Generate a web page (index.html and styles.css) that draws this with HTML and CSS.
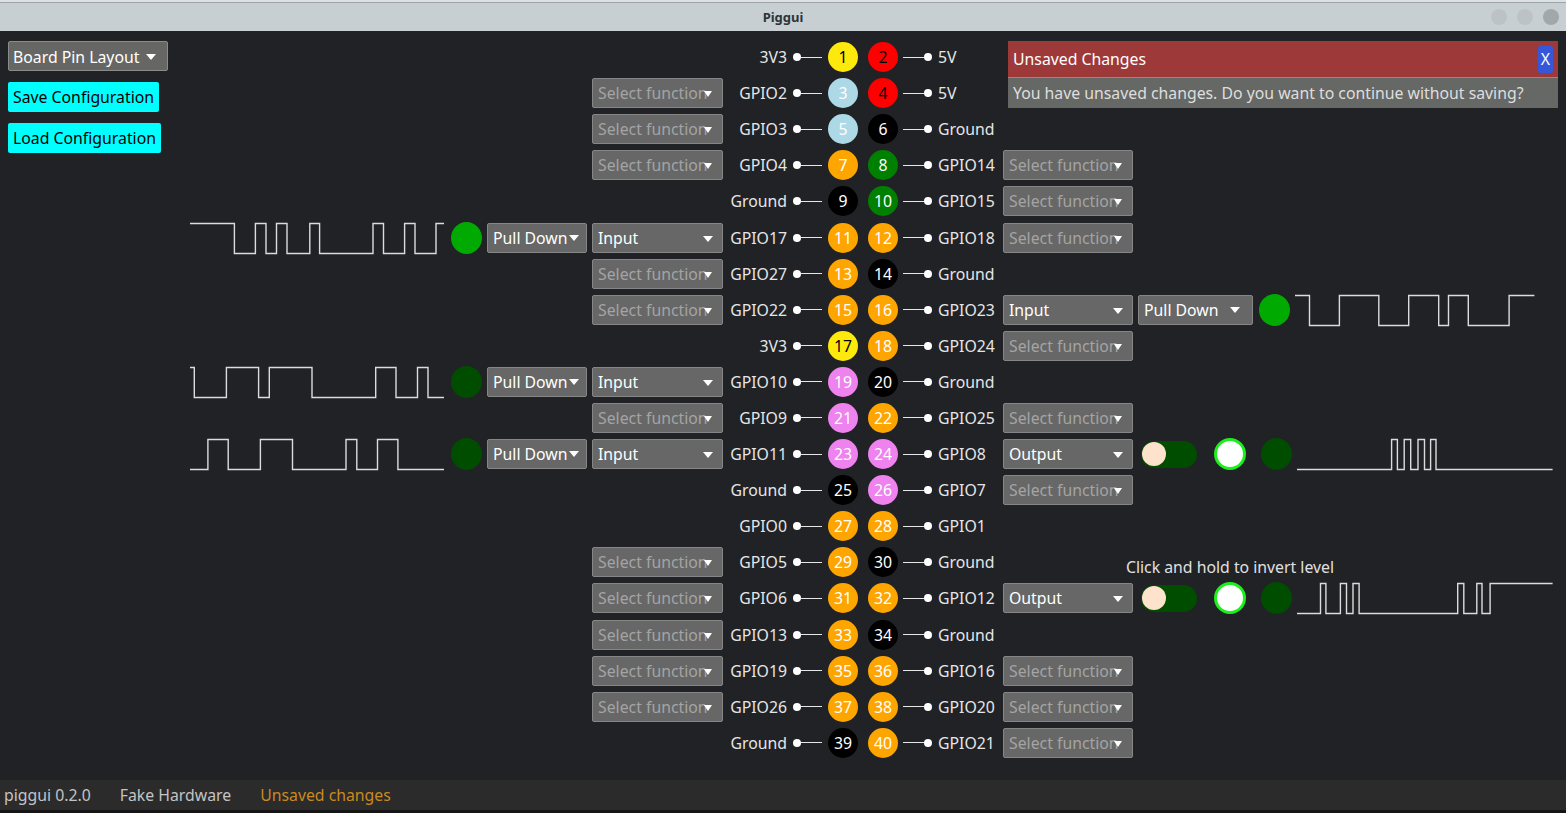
FILE: index.html
```html
<!DOCTYPE html>
<html>
<head>
<meta charset="utf-8">
<title>Piggui</title>
<link rel="stylesheet" href="styles.css">
</head>
<body>
<div class="titlebar">
  <span class="title">Piggui</span>
  <div class="wbtns"><i class="wb"></i><i class="wb"></i><i class="wb dark"></i></div>
</div>
<div class="main">
  <div class="sidebar">
    <div class="btn-dd">Board Pin Layout <i class="arr"></i></div>
    <div class="btn-cyan">Save Configuration</div>
    <div class="btn-cyan">Load Configuration</div>
  </div>
  <div class="board">
    <!-- 1 -->
    <div class="row">
      <div class="lside"><span class="lbl">3V3</span></div>
      <span class="dot"></span><span class="wire"></span>
      <span class="pin yel">1</span><span class="pin red">2</span>
      <span class="wire r"></span><span class="dot"></span>
      <div class="rside"><span class="lbl">5V</span></div>
    </div>
    <!-- 2 -->
    <div class="row">
      <div class="lside"><div class="sel fn"><span class="txt">Select function</span><i class="arr sm"></i></div><span class="lbl">GPIO2</span></div>
      <span class="dot"></span><span class="wire"></span>
      <span class="pin lb">3</span><span class="pin red">4</span>
      <span class="wire r"></span><span class="dot"></span>
      <div class="rside"><span class="lbl">5V</span></div>
    </div>
    <!-- 3 -->
    <div class="row">
      <div class="lside"><div class="sel fn"><span class="txt">Select function</span><i class="arr sm"></i></div><span class="lbl">GPIO3</span></div>
      <span class="dot"></span><span class="wire"></span>
      <span class="pin lb">5</span><span class="pin blk">6</span>
      <span class="wire r"></span><span class="dot"></span>
      <div class="rside"><span class="lbl">Ground</span></div>
    </div>
    <!-- 4 -->
    <div class="row">
      <div class="lside"><div class="sel fn"><span class="txt">Select function</span><i class="arr sm"></i></div><span class="lbl">GPIO4</span></div>
      <span class="dot"></span><span class="wire"></span>
      <span class="pin org">7</span><span class="pin grn">8</span>
      <span class="wire r"></span><span class="dot"></span>
      <div class="rside"><span class="lbl">GPIO14</span><div class="sel fn"><span class="txt">Select function</span><i class="arr sm"></i></div></div>
    </div>
    <!-- 5 -->
    <div class="row">
      <div class="lside"><span class="lbl">Ground</span></div>
      <span class="dot"></span><span class="wire"></span>
      <span class="pin blk">9</span><span class="pin grn">10</span>
      <span class="wire r"></span><span class="dot"></span>
      <div class="rside"><span class="lbl">GPIO15</span><div class="sel fn"><span class="txt">Select function</span><i class="arr sm"></i></div></div>
    </div>
    <!-- 6 -->
    <div class="row">
      <div class="lside">
        <svg class="wave" viewBox="0 0 256 36"><path d="M0 3.5H44.4V33.5H65.4V3.5H76V33.5H86.5V3.5H97V33.5H119.8V3.5H129.6V33.5H183V3.5H193.5V33.5H214.6V3.5H225V33.5H246V3.5H254"/></svg>
        <span class="led on"></span>
        <div class="pd">Pull Down<i class="arr"></i></div>
        <div class="sel"><span class="txt">Input</span><i class="arr"></i></div>
        <span class="lbl">GPIO17</span>
      </div>
      <span class="dot"></span><span class="wire"></span>
      <span class="pin org">11</span><span class="pin org">12</span>
      <span class="wire r"></span><span class="dot"></span>
      <div class="rside"><span class="lbl">GPIO18</span><div class="sel fn"><span class="txt">Select function</span><i class="arr sm"></i></div></div>
    </div>
    <!-- 7 -->
    <div class="row">
      <div class="lside"><div class="sel fn"><span class="txt">Select function</span><i class="arr sm"></i></div><span class="lbl">GPIO27</span></div>
      <span class="dot"></span><span class="wire"></span>
      <span class="pin org">13</span><span class="pin blk">14</span>
      <span class="wire r"></span><span class="dot"></span>
      <div class="rside"><span class="lbl">Ground</span></div>
    </div>
    <!-- 8 -->
    <div class="row">
      <div class="lside"><div class="sel fn"><span class="txt">Select function</span><i class="arr sm"></i></div><span class="lbl">GPIO22</span></div>
      <span class="dot"></span><span class="wire"></span>
      <span class="pin org">15</span><span class="pin org">16</span>
      <span class="wire r"></span><span class="dot"></span>
      <div class="rside">
        <span class="lbl">GPIO23</span>
        <div class="sel"><span class="txt">Input</span><i class="arr"></i></div>
        <div class="pd wide"><span class="txt">Pull Down</span><i class="arr"></i></div>
        <span class="led on"></span>
        <svg class="wave" viewBox="0 0 256 36"><path d="M0 3.5H14.5V33.5H44.4V3.5H83.8V33.5H113.7V3.5H143.7V33.5H153.5V3.5H173.3V33.5H214.1V3.5H239.4"/></svg>
      </div>
    </div>
    <!-- 9 -->
    <div class="row">
      <div class="lside"><span class="lbl">3V3</span></div>
      <span class="dot"></span><span class="wire"></span>
      <span class="pin yel">17</span><span class="pin org">18</span>
      <span class="wire r"></span><span class="dot"></span>
      <div class="rside"><span class="lbl">GPIO24</span><div class="sel fn"><span class="txt">Select function</span><i class="arr sm"></i></div></div>
    </div>
    <!-- 10 -->
    <div class="row">
      <div class="lside">
        <svg class="wave" viewBox="0 0 256 36"><path d="M0 3.5H4.3V33.5H36.4V3.5H68.6V33.5H79.3V3.5H122V33.5H185.7V3.5H206V33.5H227.5V3.5H238V33.5H254"/></svg>
        <span class="led"></span>
        <div class="pd">Pull Down<i class="arr"></i></div>
        <div class="sel"><span class="txt">Input</span><i class="arr"></i></div>
        <span class="lbl">GPIO10</span>
      </div>
      <span class="dot"></span><span class="wire"></span>
      <span class="pin vio">19</span><span class="pin blk">20</span>
      <span class="wire r"></span><span class="dot"></span>
      <div class="rside"><span class="lbl">Ground</span></div>
    </div>
    <!-- 11 -->
    <div class="row">
      <div class="lside"><div class="sel fn"><span class="txt">Select function</span><i class="arr sm"></i></div><span class="lbl">GPIO9</span></div>
      <span class="dot"></span><span class="wire"></span>
      <span class="pin vio">21</span><span class="pin org">22</span>
      <span class="wire r"></span><span class="dot"></span>
      <div class="rside"><span class="lbl">GPIO25</span><div class="sel fn"><span class="txt">Select function</span><i class="arr sm"></i></div></div>
    </div>
    <!-- 12 -->
    <div class="row">
      <div class="lside">
        <svg class="wave" viewBox="0 0 256 36"><path d="M0 33.5H17.9V3.5H38.2V33.5H70.4V3.5H102.5V33.5H156V3.5H166.8V33.5H187.5V3.5H207.9V33.5H254"/></svg>
        <span class="led"></span>
        <div class="pd">Pull Down<i class="arr"></i></div>
        <div class="sel"><span class="txt">Input</span><i class="arr"></i></div>
        <span class="lbl">GPIO11</span>
      </div>
      <span class="dot"></span><span class="wire"></span>
      <span class="pin vio">23</span><span class="pin vio">24</span>
      <span class="wire r"></span><span class="dot"></span>
      <div class="rside">
        <span class="lbl">GPIO8</span>
        <div class="sel"><span class="txt">Output</span><i class="arr"></i></div>
        <span class="toggle"><i class="knob"></i></span>
        <span class="push"></span>
        <span class="led"></span>
        <svg class="wave" viewBox="0 0 256 36"><path d="M0 33.5H94.6V3.5H100.4V33.5H107.2V3.5H113.7V33.5H121V3.5H127.5V33.5H133.6V3.5H139V33.5H255.6"/></svg>
      </div>
    </div>
    <!-- 13 -->
    <div class="row">
      <div class="lside"><span class="lbl">Ground</span></div>
      <span class="dot"></span><span class="wire"></span>
      <span class="pin blk">25</span><span class="pin vio">26</span>
      <span class="wire r"></span><span class="dot"></span>
      <div class="rside"><span class="lbl">GPIO7</span><div class="sel fn"><span class="txt">Select function</span><i class="arr sm"></i></div></div>
    </div>
    <!-- 14 -->
    <div class="row">
      <div class="lside"><span class="lbl">GPIO0</span></div>
      <span class="dot"></span><span class="wire"></span>
      <span class="pin org">27</span><span class="pin org">28</span>
      <span class="wire r"></span><span class="dot"></span>
      <div class="rside"><span class="lbl">GPIO1</span></div>
    </div>
    <!-- 15 -->
    <div class="row">
      <div class="lside"><div class="sel fn"><span class="txt">Select function</span><i class="arr sm"></i></div><span class="lbl">GPIO5</span></div>
      <span class="dot"></span><span class="wire"></span>
      <span class="pin org">29</span><span class="pin blk">30</span>
      <span class="wire r"></span><span class="dot"></span>
      <div class="rside"><span class="lbl">Ground</span></div>
    </div>
    <!-- 16 -->
    <div class="row">
      <div class="lside"><div class="sel fn"><span class="txt">Select function</span><i class="arr sm"></i></div><span class="lbl">GPIO6</span></div>
      <span class="dot"></span><span class="wire"></span>
      <span class="pin org">31</span><span class="pin org">32</span>
      <span class="wire r"></span><span class="dot"></span>
      <div class="rside">
        <span class="lbl">GPIO12</span>
        <div class="sel"><span class="txt">Output</span><i class="arr"></i></div>
        <span class="toggle"><i class="knob"></i></span>
        <span class="push"><span class="tip">Click and hold to invert level</span></span>
        <span class="led"></span>
        <svg class="wave" viewBox="0 0 256 36"><path d="M0 33.5H23.5V3.5H28.9V33.5H43.4V3.5H49.5V33.5H56V3.5H62.1V33.5H160.7V3.5H166.8V33.5H179.8V3.5H185V33.5H193.1V3.5H255.6"/></svg>
      </div>
    </div>
    <!-- 17 -->
    <div class="row">
      <div class="lside"><div class="sel fn"><span class="txt">Select function</span><i class="arr sm"></i></div><span class="lbl">GPIO13</span></div>
      <span class="dot"></span><span class="wire"></span>
      <span class="pin org">33</span><span class="pin blk">34</span>
      <span class="wire r"></span><span class="dot"></span>
      <div class="rside"><span class="lbl">Ground</span></div>
    </div>
    <!-- 18 -->
    <div class="row">
      <div class="lside"><div class="sel fn"><span class="txt">Select function</span><i class="arr sm"></i></div><span class="lbl">GPIO19</span></div>
      <span class="dot"></span><span class="wire"></span>
      <span class="pin org">35</span><span class="pin org">36</span>
      <span class="wire r"></span><span class="dot"></span>
      <div class="rside"><span class="lbl">GPIO16</span><div class="sel fn"><span class="txt">Select function</span><i class="arr sm"></i></div></div>
    </div>
    <!-- 19 -->
    <div class="row">
      <div class="lside"><div class="sel fn"><span class="txt">Select function</span><i class="arr sm"></i></div><span class="lbl">GPIO26</span></div>
      <span class="dot"></span><span class="wire"></span>
      <span class="pin org">37</span><span class="pin org">38</span>
      <span class="wire r"></span><span class="dot"></span>
      <div class="rside"><span class="lbl">GPIO20</span><div class="sel fn"><span class="txt">Select function</span><i class="arr sm"></i></div></div>
    </div>
    <!-- 20 -->
    <div class="row">
      <div class="lside"><span class="lbl">Ground</span></div>
      <span class="dot"></span><span class="wire"></span>
      <span class="pin blk">39</span><span class="pin org">40</span>
      <span class="wire r"></span><span class="dot"></span>
      <div class="rside"><span class="lbl">GPIO21</span><div class="sel fn"><span class="txt">Select function</span><i class="arr sm"></i></div></div>
    </div>
  </div>

  <div class="dialog">
    <div class="dlg-head"><span>Unsaved Changes</span><span class="xbtn">X</span></div>
    <div class="dlg-body">You have unsaved changes. Do you want to continue without saving?</div>
  </div>
</div>
<div class="status">
  <span class="st">piggui 0.2.0</span>
  <span class="st">Fake Hardware</span>
  <span class="st warn">Unsaved changes</span>
</div>
<div class="bottom"></div>
</body>
</html>
```
FILE: styles.css
```css
* { box-sizing: border-box; }
html, body { margin: 0; padding: 0; }
body {
  width: 1566px;
  height: 813px;
  overflow: hidden;
  background: #202226;
  font-family: "Noto Sans", "Open Sans", sans-serif;
  font-size: 15.8px;
  color: #e4e4e4;
  display: flex;
  flex-direction: column;
}

/* title bar */
.titlebar {
  height: 31px;
  flex: none;
  background: linear-gradient(#dde1e3 0, #dde1e3 2px, #9ea3a6 2px, #9ea3a6 3px, #c8cfd2 3px);
  display: flex;
  align-items: center;
  justify-content: center;
  position: relative;
  padding-top: 3px;
}
.title { font-size: 13px; font-weight: bold; color: #2e3436; font-family: "Noto Sans", sans-serif; }
.wbtns { position: absolute; right: 7px; top: 9px; display: flex; gap: 10px; }
.wb { display: block; width: 16px; height: 16px; border-radius: 50%; background: #bcc2c5; }
.wb.dark { background: #a2a7aa; }

/* main */
.main { flex: 1; display: flex; position: relative; }
.sidebar {
  width: 182px;
  flex: none;
  padding: 10px 0 0 8px;
  display: flex;
  flex-direction: column;
  align-items: flex-start;
  gap: 11px;
}
.btn-dd {
  height: 30px;
  background: #666765;
  border: 1px solid #8a8b8a;
  border-radius: 2px;
  color: #fff;
  padding: 1px 11px 0 4px;
  display: flex;
  align-items: center;
  gap: 7px;
}
.btn-cyan {
  height: 30px;
  background: #00ffff;
  color: #000;
  border-radius: 2px;
  padding: 0 5px;
  display: flex;
  align-items: center;
}

/* board */
.board { padding-top: 8px; display: flex; flex-direction: column; }
.row { height: 36.1px; display: flex; align-items: center; }
.lside { width: 605px; display: flex; align-items: center; justify-content: flex-end; gap: 5px; }
.rside { display: flex; align-items: center; gap: 5px; }
.lside .lbl { width: 60px; text-align: right; margin-left: -1px; }
.rside .lbl { width: 60px; }
.lbl { color: #e6e6e6; white-space: nowrap; }
.dot { width: 8px; height: 8px; border-radius: 50%; background: #fff; flex: none; margin-left: 6px; }
.wire { width: 21px; height: 1px; background: #e6e6e6; flex: none; margin-right: 6px; }
.wire.r { margin-right: 0; margin-left: 5px; }
.wire.r + .dot { margin-left: 0; margin-right: 6px; }
.pin {
  width: 30px; height: 30px; border-radius: 50%;
  flex: none;
  display: flex; align-items: center; justify-content: center;
  color: #fff;
}
.pin + .pin { margin-left: 10px; }
.yel { background: #fde90c; color: #000; }
.red { background: #ff0000; color: #000; }
.lb { background: #add8e6; }
.org { background: #ffa500; }
.grn { background: #008000; }
.blk { background: #000; }
.vio { background: #ee82ee; }

/* controls */
.sel, .pd {
  height: 30px;
  background: #666766;
  border: 1px solid #858685;
  border-radius: 2px;
  color: #fff;
  display: flex;
  align-items: center;
  position: relative;
  flex: none;
  white-space: nowrap;
  overflow: hidden;
}
.sel { width: 131px; padding: 0 5px; }
.rside .sel { width: 130px; }
.sel .txt { flex: 1; overflow: hidden; }
.sel .arr { position: absolute; right: 9px; top: 12px; }
.sel.fn { color: #a4a4a4; }
.sel.fn .arr.sm { right: 10px; top: 12px; border-left-width: 4px; border-right-width: 4px; border-top-width: 6px; }
.pd { width: 100px; padding: 0 5px; }
.pd .arr { margin-left: 1px; }
.pd.wide { width: 115px; }
.pd.wide .txt { flex: 1; }
.pd.wide .arr { margin-right: 7px; }
.arr {
  display: inline-block;
  width: 0; height: 0;
  border-left: 5px solid transparent;
  border-right: 5px solid transparent;
  border-top: 6px solid #fff;
  flex: none;
}

.led { width: 31px; height: 32px; border-radius: 50%; background: #004d00; flex: none; }
.led.on { background: #00aa00; }
.wave { width: 256px; height: 36px; flex: none; overflow: visible; }
.wave path { fill: none; stroke: #dcdcdc; stroke-width: 1.4; }
.lside .wave { margin-right: 0; }
.rside .led { margin-left: 1px; }

.toggle {
  width: 56px; height: 27px; border-radius: 14px;
  background: #004d00;
  flex: none;
  margin-left: 3px;
  display: flex; align-items: center;
  padding-left: 1px;
}
.knob { display: block; width: 24px; height: 24px; border-radius: 50%; background: #fde3cc; }
.push {
  width: 32px; height: 32px; border-radius: 50%;
  background: #fff;
  border: 3px solid #1cf01c;
  flex: none;
  margin-left: 12px;
  margin-right: 9px;
  position: relative;
}
.tip {
  position: absolute;
  bottom: 100%;
  left: 50%;
  transform: translateX(-50%);
  margin-bottom: 7px;
  white-space: nowrap;
  color: #e0e0e0;
}

/* dialog */
.dialog { position: absolute; left: 1008px; top: 10px; width: 550px; }
.dlg-head {
  height: 37px;
  background: #9d3939;
  color: #fff;
  display: flex; align-items: center; justify-content: space-between;
  padding: 0 5px;
  border-bottom: 1px solid #8c8c8c;
}
.xbtn {
  width: 15px; height: 27px;
  background: #3657d9;
  border-radius: 2px;
  color: #fff;
  display: flex; align-items: center; justify-content: center;
}
.dlg-body {
  height: 30px;
  background: #666866;
  color: #dedede;
  display: flex; align-items: center;
  padding: 0 5px;
}

/* status */
.status {
  height: 30px;
  flex: none;
  background: #2b2b2c;
  display: flex;
  align-items: center;
  padding-left: 4px;
  gap: 29px;
}
.st { color: #c4c4c4; }
.st.warn { color: #c98a1e; }
.bottom { height: 3px; flex: none; background: #151515; }
```
